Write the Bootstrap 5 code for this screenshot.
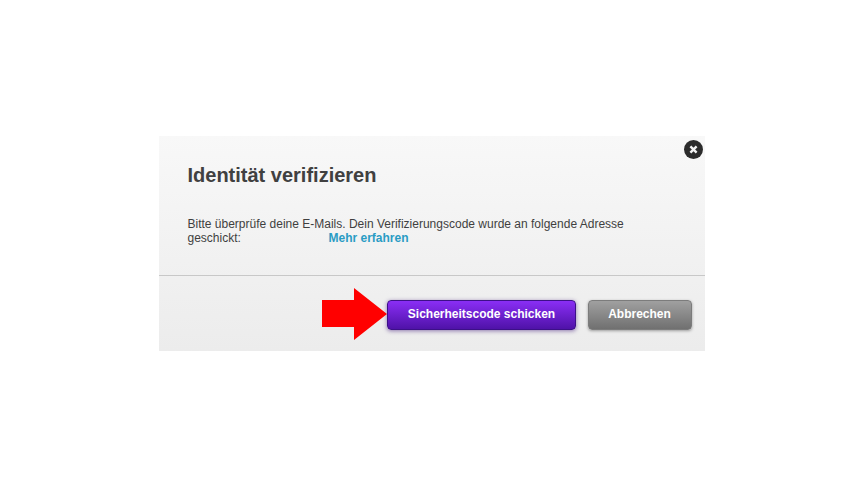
<!DOCTYPE html>
<html lang="de">
<head>
<meta charset="utf-8">
<title>Identität verifizieren</title>
<link href="https://cdn.jsdelivr.net/npm/bootstrap@5.3.0/dist/css/bootstrap.min.css" rel="stylesheet">
<style>
html, body { height: 100%; }
body { background: #fff; font-family: "Liberation Sans", Arial, sans-serif; color: #3c3c3c; }
.stage { height: 486px; padding: 136px 159px 135px; }
.dialog-box { width: 546px; height: 215px; position: relative; background: linear-gradient(#f8f8f8, #ececec); }
.dialog-head { height: 140px; padding: 27px 29px 0 28.5px; border-bottom: 1px solid #c8c8c8; }
.dialog-title { font-size: 20px; line-height: 24px; font-weight: 700; color: #404040; margin: 0 0 30px; }
.dialog-text { font-size: 12px; line-height: 14px; margin: 0; width: 470px; color: #3f3f3f; }
.short-label { width: 141px; }
.more-link { color: #2a9cc4; font-weight: 700; text-decoration: none; }
.dialog-foot { height: 75px; padding: 24px 13px 0 0; gap: 12px; }
.act-btn { height: 30px; padding: 0 0 2px; border-radius: 4px; color: #fff; font-size: 12px; font-weight: 700; font-family: inherit; line-height: 26px; }
.act-primary { width: 189px; background: linear-gradient(#8a2ef5, #4f12a8); border: 1px solid #3d1088; box-shadow: 0 1px 4px rgba(60,20,120,.55); }
.act-secondary { width: 104px; padding-right: 1px; background: linear-gradient(#a0a0a0, #707070); border: 1px solid #7c7c7c; box-shadow: 0 1px 3px rgba(0,0,0,.35); }
.close-x { position: absolute; top: 4px; right: 2px; width: 19px; height: 19px; padding: 0; border: 0; background: none; line-height: 0; }
.red-arrow { position: absolute; left: 163px; top: 152px; }
</style>
</head>
<body>
<div class="stage">
  <div class="dialog-box">
    <div class="dialog-head">
      <h1 class="dialog-title">Identität verifizieren</h1>
      <div class="dialog-text">
        <div>Bitte überprüfe deine E-Mails. Dein Verifizierungscode wurde an folgende Adresse</div>
        <div class="d-flex"><span class="short-label">geschickt:</span><a class="more-link" href="#">Mehr erfahren</a></div>
      </div>
    </div>
    <div class="dialog-foot d-flex justify-content-end align-items-start">
      <button type="button" class="btn act-btn act-primary">Sicherheitscode schicken</button>
      <button type="button" class="btn act-btn act-secondary">Abbrechen</button>
    </div>
    <button type="button" class="close-x" aria-label="Schließen">
      <svg width="19" height="19" viewBox="0 0 19 19"><circle cx="9.5" cy="9.5" r="9.5" fill="#2c2c2c"/><path d="M6.4 6.4l6.2 6.2M12.6 6.4l-6.2 6.2" stroke="#f4f4f4" stroke-width="2.4" fill="none"/></svg>
    </button>
    <svg class="red-arrow" width="65" height="52" viewBox="0 0 65 52"><path d="M0 12H32V0L65 26 32 52V39H0Z" fill="#ff0000"/></svg>
  </div>
</div>
<script src="https://cdn.jsdelivr.net/npm/bootstrap@5.3.0/dist/js/bootstrap.bundle.min.js"></script>
</body>
</html>
